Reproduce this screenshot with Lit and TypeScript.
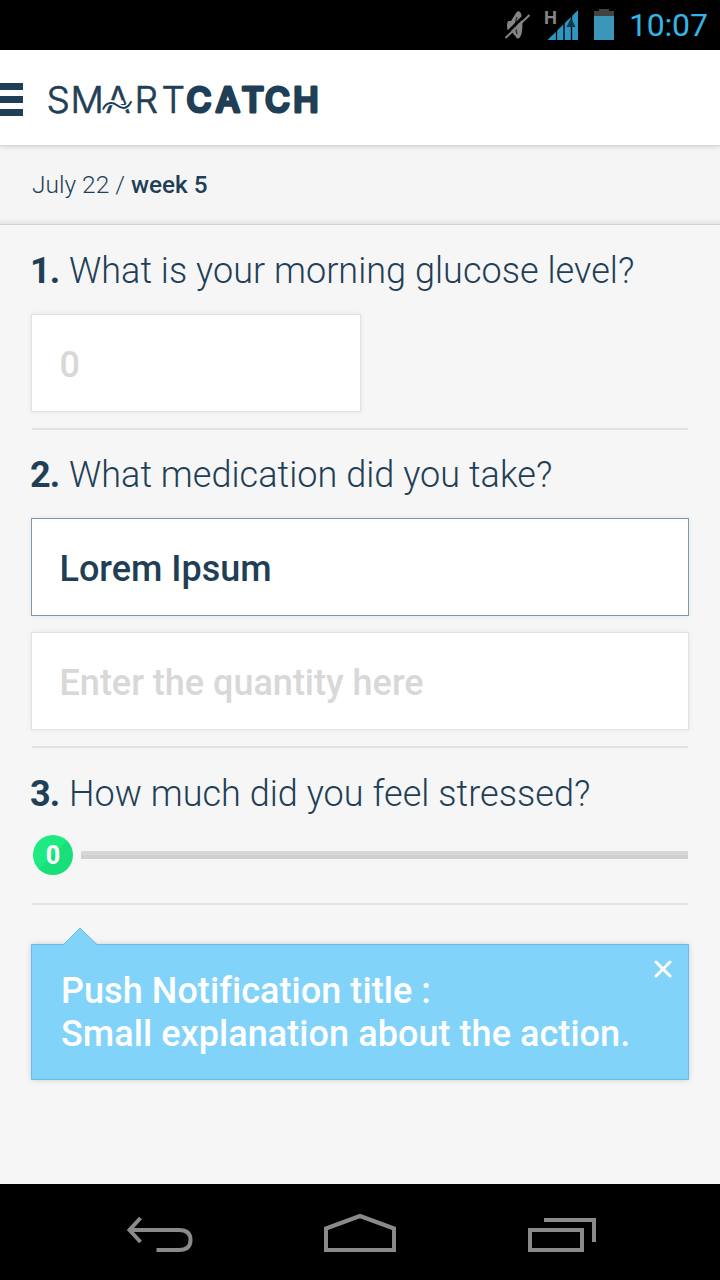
import { LitElement, html, css } from "lit";
import { customElement } from "lit/decorators.js";

@customElement("status-bar")
class StatusBar extends LitElement {
  static styles = css`
    :host { display: flex; height: 50px; background: #000; justify-content: flex-end; align-items: center; box-sizing: border-box; padding-right: 12px; }
    svg { display: block; }
    .clock { font: 400 32px/50px Roboto, sans-serif; color: #33b5e5; width: 79px; margin-left: 14px; letter-spacing: -0.2px; white-space: nowrap; }
  `;
  render() {
    return html`
      <svg width="115" height="50" viewBox="500 0 115 50">
        <path d="M508 21h3l5-8c1-2 3-2 4-1 3 3 3.500 21 0 25-1 2-3 2-4 0l-5-6h-3q-2-5 0-10z" fill="#858585"/>
        <path d="M517 17q-3 8 0 17" fill="none" stroke="#333" stroke-width="1.500"/>
        <path d="M504 36L527 13" stroke="#000" stroke-width="3"/>
        <path d="M505.500 38L529.500 15" stroke="#858585" stroke-width="2"/>
        <text x="544" y="23.500" font-family="Roboto, sans-serif" font-weight="700" font-size="19" textLength="13" lengthAdjust="spacingAndGlyphs" fill="#858585">H</text>
        <path d="M547.500 40L578 10V40z" fill="#2e96c0"/>
        <path d="M556.500 28V40M564 20V40M571.500 14V40" stroke="#000" stroke-width="1.300"/>
        <path d="M571 18l4.500 9h-9z" fill="#11394a"/>
        <path d="M594 16V11h5V9h10v2h5v5z" fill="#424242"/>
        <path d="M594 16h20v24h-20z" fill="#3c96ba"/>
      </svg>
      <div class="clock">10:07</div>
    `;
  }
}

@customElement("app-header")
class AppHeader extends LitElement {
  static styles = css`
    :host { display: flex; height: 95px; background: #fff; align-items: center; border-bottom: 1px solid #d4d6d6; box-shadow: 0 1px 5px rgba(0,0,0,.13); position: relative; box-sizing: content-box; }
    .menu { display: flex; flex-direction: column; gap: 6px; width: 23px; padding-top: 3px; }
    .menu i { height: 7px; background: #1f3f56; }
    svg { display: block; margin-left: 17px; }
    text { font-family: Inter, sans-serif; fill: #1f3f56; stroke: #1f3f56; stroke-linejoin: round; }
    .thin { font-weight: 300; font-size: 37px; stroke-width: .7px; }
    .bold { font-weight: 500; font-size: 34px; stroke-width: 3.2px; }
  `;
  render() {
    return html`
      <div class="menu"><i></i><i></i><i></i></div>
      <svg width="290" height="60" viewBox="40 68.500 290 60">
        <text class="thin" x="105.500" y="113.500">A</text>
        <path d="M112.800 104.500L113.500 101H123L124.300 104.500z" fill="#fff"/>
        <path d="M103 109C106 102.500 112 101.500 117 105.500S127 110 131 102" fill="none" stroke="#fff" stroke-width="5"/>
        <path d="M103.300 109.300C106 103 112 102 117 105.800S127 110 131 102.500" fill="none" stroke="#1f3f56" stroke-width="2" stroke-linecap="round"/>
        <text class="thin" x="46.500" y="113.500">S</text>
        <text class="thin" x="70.500" y="113.500">M</text>
        <text class="thin" x="134.500 161.500" y="113.500">RT</text>
        <text class="bold" x="186.500 215.800 241.700 265 293.300" y="112.500">CATCH</text>
      </svg>
    `;
  }
}

@customElement("nav-bar")
class NavBar extends LitElement {
  static styles = css`
    :host { display: flex; height: 96px; background: #000; }
    svg { display: block; }
  `;
  render() {
    return html`
      <svg width="720" height="96" viewBox="0 1184 720 96" fill="none" stroke="#8a8a8a" stroke-width="4">
        <path d="M140.500 1218L129.500 1230L140.500 1242M130 1230H179C187 1230 190.500 1234 190.500 1240S187 1250 179 1250H156.500"/>
        <path d="M326 1250V1228.500L360 1216L394 1228.500V1250z"/>
        <path d="M530 1230h52v20h-52zM544 1220h50v22"/>
      </svg>
    `;
  }
}

@customElement("app-root")
class AppRoot extends LitElement {
  static styles = css`
    :host { display: flex; flex-direction: column; height: 1280px; width: 720px; background: #f6f6f6; font-family: Roboto, sans-serif; color: #1f3f56; overflow: hidden; }
    .date { height: 78px; box-sizing: border-box; padding-left: 32px; font-weight: 300; font-size: 24.5px; line-height: 78px; white-space: nowrap; background: linear-gradient(#f5f5f5 72px, #e6e6e6); }
    .date b { font-weight: 500; font-size: 24.3px; }
    .content { flex: 1; border-top: 1px solid #d2d2d2; padding: 0 32px; display: flex; flex-direction: column; }
    section { border-bottom: 2px solid #e2e2e2; box-sizing: border-box; display: flex; flex-direction: column; }
    .q1 { height: 205px; }
    .q2 { height: 318px; }
    .q3 { height: 157px; }
    h2 { margin: 0 0 0 -2px; font-weight: 300; font-size: 36px; line-height: 44px; height: 43px; padding-top: 24px; white-space: nowrap; letter-spacing: .04px; }
    h2 b { font-weight: 700; letter-spacing: -1px; margin-right: 1px; }
    .q2 h2 { padding-top: 23px; }
    .field { box-sizing: border-box; height: 98px; margin: 22px -1px 0; background: #fff; border: 1px solid #e2e2e2; box-shadow: 0 0 5px rgba(0,0,0,.07); padding-left: 27.5px; font-weight: 500; font-size: 36px; line-height: 100px; color: #d8d8d8; white-space: nowrap; }
    .short { width: 330px; }
    .filled { color: #1f3f56; border-color: #7d98a9; }
    .second { margin-top: 16px; }
    .slider { display: flex; align-items: center; gap: 8px; padding-left: 1px; margin-top: 20px; }
    .knob { width: 40px; height: 40px; border-radius: 50%; background: linear-gradient(135deg, #1eea82 50%, #19df7b 50%); color: #fff; font-weight: 800; font-size: 25px; line-height: 42px; text-align: center; }
    .track { flex: 1; height: 8px; background: linear-gradient(#d7d7d7 50%, #d0d0d0 50%); }
    .notice { position: relative; box-sizing: border-box; height: 136px; margin: 39px -1px 0; background: #81d3fa; border: 1px solid #66bde6; box-shadow: 0 0 6px rgba(0,0,0,.16); color: #fff; font-weight: 500; font-size: 36px; line-height: 43px; padding: 25px 29px; white-space: nowrap; letter-spacing: .06px; }
    .arrow { position: absolute; left: 30px; top: -18px; }
    .close { position: absolute; right: 16px; top: 15px; }
  `;
  render() {
    return html`
      <status-bar></status-bar>
      <app-header></app-header>
      <div class="date">July 22 / <b>week 5</b></div>
      <div class="content">
        <section class="q1">
          <h2><b>1.</b> <span>What is your morning glucose level?</span></h2>
          <div class="field short">0</div>
        </section>
        <section class="q2">
          <h2><b>2.</b> <span>What medication did you take?</span></h2>
          <div class="field filled">Lorem Ipsum</div>
          <div class="field second">Enter the quantity here</div>
        </section>
        <section class="q3">
          <h2><b>3.</b> <span>How much did you feel stressed?</span></h2>
          <div class="slider"><div class="knob">0</div><div class="track"></div></div>
        </section>
        <div class="notice">
          <svg class="arrow" width="38" height="19" viewBox="0 0 38 19"><path d="M1.500 18L18 1L35.500 18V19H1.500z" fill="#81d3fa"/><path d="M1 18L18 1L35.500 18" fill="none" stroke="#66bde6"/></svg>
          <svg class="close" width="18" height="18" viewBox="0 0 18 18"><path d="M2 2L16 16M16 2L2 16" stroke="#fff" stroke-width="3" stroke-linecap="round"/></svg>
          <div>Push Notification title :</div>
          <div>Small explanation about the action.</div>
        </div>
      </div>
      <nav-bar></nav-bar>
    `;
  }
}
